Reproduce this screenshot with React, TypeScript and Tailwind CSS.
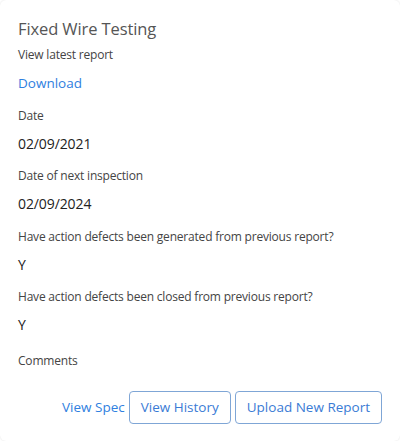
import React from 'react';

const rows = [
  { label: 'Date', value: '02/09/2021' },
  { label: 'Date of next inspection', value: '02/09/2024' },
  { label: 'Have action defects been generated from previous report?', value: 'Y' },
  { label: 'Have action defects been closed from previous report?', value: 'Y' },
];

const App: React.FC = () => {
  return (
    <div className="w-[400px] h-[441px] bg-white" style={{ fontFamily: '"Open Sans", "Noto Sans", sans-serif' }}>
      <div className="h-full bg-white rounded-md shadow-[0_0_2px_rgba(0,0,0,0.12)] pl-[18px] pr-[18px] pt-[16px]">
        <h2 className="text-[16.5px] leading-[26px] text-[#555] tracking-[-0.1px]">Fixed Wire Testing</h2>
        <p className="mt-[4px] text-[12px] leading-[18px] text-[#444] tracking-[-0.2px]">View latest report</p>
        <a className="block mt-[9px] text-[13.5px] leading-[20px] text-[#2f80e0]">Download</a>

        {rows.map((row) => (
          <div key={row.label} className="mt-[13.5px]">
            <p className="text-[12px] leading-[18px] text-[#444] tracking-[-0.2px]">{row.label}</p>
            <p className="mt-[9px] text-[14px] leading-[20px] text-[#222] tracking-[-0.1px]">{row.value}</p>
          </div>
        ))}

        <p className="mt-[17px] text-[12px] leading-[18px] text-[#444] tracking-[-0.2px]">Comments</p>

        {/* Actions */}
        <div className="mt-[21px] flex items-center justify-end gap-[4px]">
          <a className="text-[13.5px] text-[#2f80e0]">View Spec</a>
          <button className="h-[33px] px-[11px] rounded-[4px] border border-[#7fa6d6] text-[13.5px] text-[#3a7bd5]">
            View History
          </button>
          <button className="h-[33px] px-[11px] rounded-[4px] border border-[#7fa6d6] text-[13.5px] text-[#3a7bd5]">
            Upload New Report
          </button>
        </div>
      </div>
    </div>
  );
};

export default App;
